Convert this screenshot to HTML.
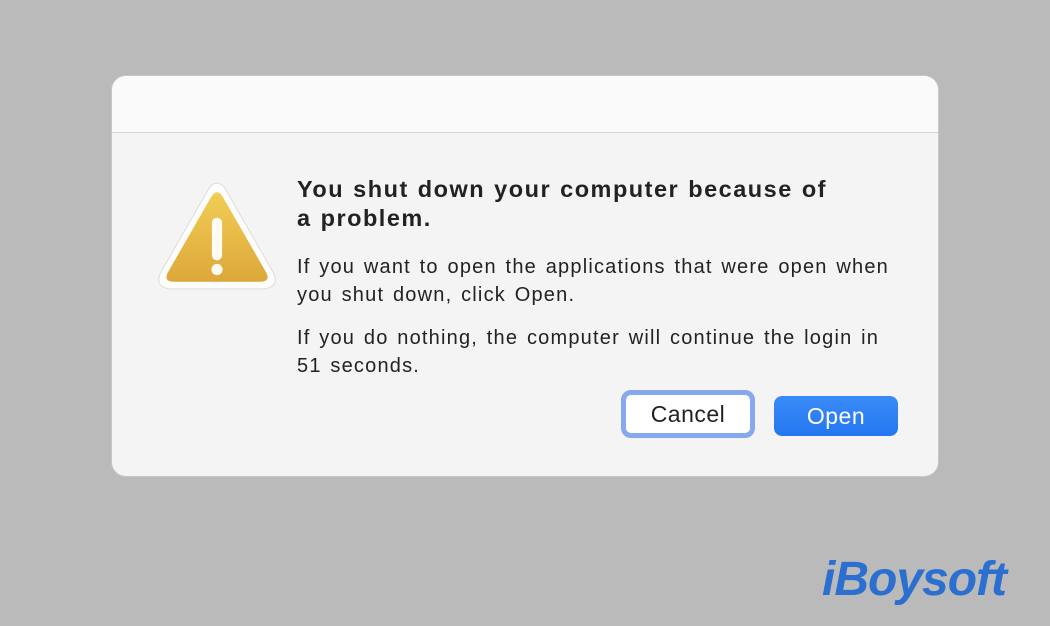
<!DOCTYPE html>
<html><head><style>
body{margin:0;width:1050px;height:626px;background:#bababa;position:relative;overflow:hidden;font-family:"Liberation Sans",sans-serif}
.dlg{position:absolute;left:112px;top:76px;width:826px;height:400px;background:#f4f4f4;border-radius:14px;overflow:hidden;box-shadow:0 0 0 1px #c8c8c8}
.hd{height:56px;background:#fafafa;border-bottom:1px solid #d6d6d6}
.t{position:absolute;left:185px;color:#222;white-space:nowrap}
.title{top:99px;font-size:23.5px;font-weight:bold;line-height:29px;letter-spacing:1.5px;word-spacing:1px}
.p{font-size:20px;line-height:28px;letter-spacing:1.2px;word-spacing:2px}
.cancel{position:absolute;left:509px;top:314px;width:124px;height:38px;border:5px solid #85a9ec;border-radius:10px;background:#fff;font-size:23px;color:#222;text-align:center;line-height:38px;box-sizing:content-box;letter-spacing:0.5px}
.open{position:absolute;left:662px;top:320px;width:124px;height:40px;border-radius:8px;background:linear-gradient(#3a8af8,#2477f0);color:#fff;font-size:23px;text-align:center;line-height:40px;letter-spacing:0.5px}
.logo{position:absolute;left:822px;top:552px;font-size:48px;font-weight:bold;font-style:italic;color:#2b6fd0;letter-spacing:-1px}
</style></head><body>
<div class="dlg">
<div class="hd"></div>
<svg style="position:absolute;left:43px;top:104px" width="124" height="114" viewBox="0 0 122 112">
<defs><linearGradient id="g" x1="0" y1="0" x2="0" y2="1"><stop offset="0" stop-color="#f2cd55"/><stop offset="1" stop-color="#dca83a"/></linearGradient></defs>
<path d="M61 3 Q66 3 70 10 L117 92 Q122 105 108 107 L14 107 Q0 105 5 92 L52 10 Q56 3 61 3Z" fill="#fdfdfd" stroke="#ddd" stroke-width="1"/>
<path d="M61 12 Q64 12 67 17 L110 92 Q113 100 104 100 L18 100 Q9 100 12 92 L55 17 Q58 12 61 12Z" fill="url(#g)"/>
<rect x="56" y="37" width="10" height="42" rx="5" fill="#fcfcf5"/>
<circle cx="61" cy="88" r="5.5" fill="#fcfcf5"/>
</svg>
<div class="t title">You shut down your computer because of<br>a problem.</div>
<div class="t p" style="top:177px">If you want to open the applications that were open when<br>you shut down, click Open.</div>
<div class="t p" style="top:248px">If you do nothing, the computer will continue the login in<br>51 seconds.</div>
<div class="cancel">Cancel</div>
<div class="open">Open</div>
</div>
<div class="logo">iBoysoft</div>
</body></html>
